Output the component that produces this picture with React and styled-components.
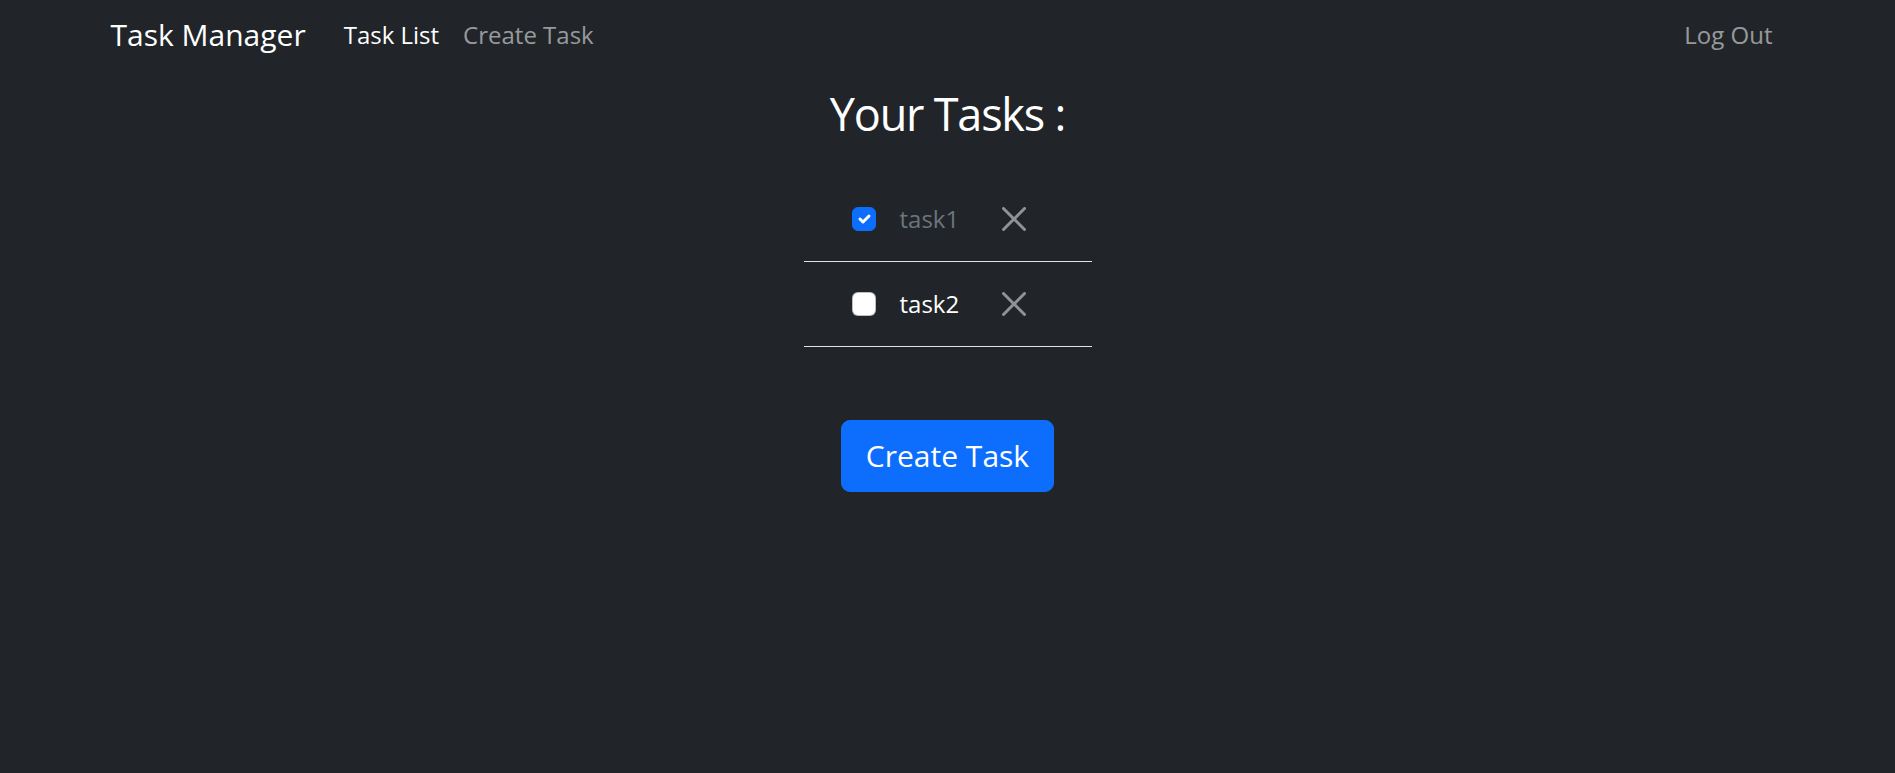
import React, { useState } from "react";
import styled, { createGlobalStyle } from "styled-components";

const GlobalStyle = createGlobalStyle`
  html, body {
    margin: 0;
    padding: 0;
    background: #212529;
    font-family: "Open Sans", "Noto Sans", sans-serif;
  }
  * {
    box-sizing: border-box;
  }
`;

const Page = styled.div`
  min-height: 773px;
  background: #212529;
  color: #fff;
`;

const NavBar = styled.nav`
  padding: 12px 0;
`;

const NavContainer = styled.div`
  width: 1710px;
  margin: 0 auto;
  padding: 0 18px;
  display: flex;
  align-items: center;
`;

const Brand = styled.a`
  font-size: 30px;
  line-height: 45px;
  color: #fff;
  margin-right: 26px;
  text-decoration: none;
`;

const NavLinks = styled.div`
  display: flex;
  align-items: center;
  flex: 1;
`;

const NavLink = styled.a`
  font-size: 24px;
  line-height: 36px;
  padding: 0 12px;
  color: ${(props) => (props.active ? "#fff" : "rgba(255, 255, 255, 0.55)")};
  text-decoration: none;
  cursor: pointer;
`;

const Main = styled.main`
  display: flex;
  flex-direction: column;
  align-items: center;
  padding-top: 16px;
`;

const Heading = styled.h2`
  margin: 0 0 34px;
  font-size: 45px;
  font-weight: 400;
  line-height: 57.6px;
  letter-spacing: -1.2px;
`;

const TaskList = styled.ul`
  list-style: none;
  margin: 0;
  padding: 0;
  width: 288px;
`;

const TaskRow = styled.li`
  display: flex;
  align-items: center;
  height: 85px;
  padding-left: 48px;
  border-bottom: 1px solid #dee2e6;
`;

const Check = styled.span`
  width: 24px;
  height: 24px;
  flex-shrink: 0;
  border-radius: 6px;
  display: flex;
  align-items: center;
  justify-content: center;
  margin-right: 24px;
  cursor: pointer;
  background: ${(props) => (props.checked ? "#0d6efd" : "#fff")};
  border: 1px solid ${(props) => (props.checked ? "#0d6efd" : "rgba(0, 0, 0, 0.25)")};
`;

const TaskName = styled.span`
  width: 96px;
  flex-shrink: 0;
  font-size: 24px;
  line-height: 36px;
  color: ${(props) => (props.done ? "#6c757d" : "#fff")};
`;

const CloseButton = styled.button`
  width: 36px;
  height: 36px;
  flex-shrink: 0;
  padding: 6px;
  border: 0;
  background: transparent;
  opacity: 0.5;
  cursor: pointer;
  display: flex;
  align-items: center;
  justify-content: center;
`;

const CreateButton = styled.button`
  margin-top: 73px;
  height: 72px;
  padding: 0 24px;
  border: 1px solid #0d6efd;
  border-radius: 9px;
  background: #0d6efd;
  color: #fff;
  font-family: inherit;
  font-size: 30px;
  line-height: 45px;
  cursor: pointer;
`;

const CheckMark = () => (
  <svg width="20" height="20" viewBox="0 0 20 20" fill="none">
    <path
      d="m6 10 3 3 6-6"
      stroke="#fff"
      strokeWidth="3"
      strokeLinecap="round"
      strokeLinejoin="round"
    />
  </svg>
);

const CloseIcon = () => (
  <svg width="24" height="24" viewBox="0 0 16 16" fill="#fff">
    <path d="M.293.293a1 1 0 0 1 1.414 0L8 6.586 14.293.293a1 1 0 1 1 1.414 1.414L9.414 8l6.293 6.293a1 1 0 0 1-1.414 1.414L8 9.414l-6.293 6.293a1 1 0 0 1-1.414-1.414L6.586 8 .293 1.707a1 1 0 0 1 0-1.414z" />
  </svg>
);

const initialTasks = [
  { id: 1, name: "task1", done: true },
  { id: 2, name: "task2", done: false },
];

const App = () => {
  const [tasks, setTasks] = useState(initialTasks);

  const toggle = (id) =>
    setTasks(tasks.map((t) => (t.id === id ? { ...t, done: !t.done } : t)));
  const remove = (id) => setTasks(tasks.filter((t) => t.id !== id));

  return (
    <Page>
      <GlobalStyle />
      <NavBar>
        <NavContainer>
          <Brand>Task Manager</Brand>
          <NavLinks>
            <NavLink active>Task List</NavLink>
            <NavLink>Create Task</NavLink>
          </NavLinks>
          <NavLink>Log Out</NavLink>
        </NavContainer>
      </NavBar>
      <Main>
        <Heading>Your Tasks :</Heading>
        <TaskList>
          {tasks.map((task) => (
            <TaskRow key={task.id}>
              <Check checked={task.done} onClick={() => toggle(task.id)}>
                {task.done && <CheckMark />}
              </Check>
              <TaskName done={task.done}>{task.name}</TaskName>
              <CloseButton onClick={() => remove(task.id)}>
                <CloseIcon />
              </CloseButton>
            </TaskRow>
          ))}
        </TaskList>
        <CreateButton>Create Task</CreateButton>
      </Main>
    </Page>
  );
};

export default App;
